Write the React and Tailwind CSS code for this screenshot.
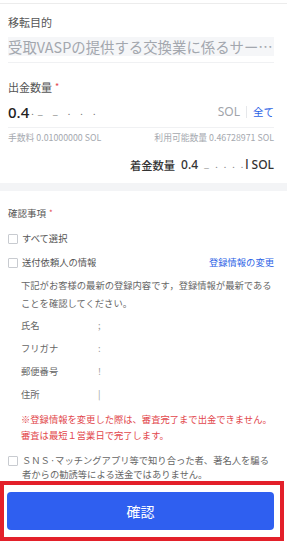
import React from "react";

function Box() {
  return <span className="inline-block w-[10px] h-[10px] border border-[#c8cbd0] rounded-[1px] bg-white shrink-0" />;
}

function InfoRow({ label, mark }) {
  return (
    <div className="h-[23px] flex items-center text-[9.3px] text-[#666]">
      <span className="w-[77px]">{label}</span>
      <span className="text-[#999]">{mark}</span>
    </div>
  );
}

export default function App() {
  return (
    <div className="w-[287px] h-[545px] bg-white overflow-hidden font-['Noto_Sans_CJK_JP',sans-serif]">
      <div className="h-[4px] border-b border-[#ececec]" />

      <div className="pl-2 pr-[13px]">
        <div className="mt-[8px] h-[20px] flex items-center text-[11px] text-[#555]">移転目的</div>
        <div className="mt-[5px] h-[19px] bg-[#f5f6f8] flex items-center text-[14.4px] text-[#a3a7ae] whitespace-nowrap">
          受取VASPの提供する交換業に係るサー…
        </div>
        <div className="mt-[6px] h-px bg-[#f0f1f3]" />

        <div className="mt-[14px] h-[20px] flex items-center text-[11px] text-[#555]">
          出金数量<span className="text-[#e5484d] ml-[3px] text-[9px]">*</span>
        </div>
        <div className="mt-[3px] h-[24px] flex items-center">
          <span className="text-[15px] font-medium text-[#222] font-['Noto_Sans',sans-serif]">0.4</span>
          <span className="text-[9px] text-[#777] tracking-[4px] ml-[2px]">._ _ . . .</span>
          <span className="ml-auto text-[12px] text-[#a0a4aa] font-['Noto_Sans',sans-serif]">SOL</span>
          <span className="mx-[6px] w-px h-[12px] bg-[#e6e8eb]" />
          <span className="text-[10.5px] text-[#2e64e6]">全て</span>
        </div>
        <div className="mt-[3px] h-px bg-[#f0f1f3]" />

        <div className="mt-[4px] h-[12px] flex items-center justify-between text-[8.8px] text-[#a5a9af]">
          <span>手数料 0.01000000 SOL</span>
          <span>利用可能数量 0.46728971 SOL</span>
        </div>

        <div className="mt-[11px] h-[20px] flex items-center justify-end text-[12px] text-[#333]">
          <span className="text-[11.3px] font-medium">着金数量</span>
          <span className="ml-[6px] font-medium font-['Noto_Sans',sans-serif]">0.4</span>
          <span className="ml-[6px] text-[9px] text-[#888] tracking-[2px]">_ . . . .</span>
          <span className="font-medium font-['Noto_Sans',sans-serif]">l SOL</span>
        </div>
      </div>

      <div className="mt-[8px] h-[8px] bg-[#f3f4f6]" />

      <div className="pl-2 pr-[13px]">
        <div className="mt-[12px] h-[20px] flex items-center text-[9.5px] text-[#555]">
          確認事項<span className="text-[#e5484d] ml-[3px] text-[8px]">*</span>
        </div>
        <div className="mt-[8px] h-[16px] flex items-center gap-[4px] text-[9.3px] text-[#555]">
          <Box />
          <span>すべて選択</span>
        </div>
        <div className="mt-[8px] h-[16px] flex items-center gap-[4px] text-[9.3px] text-[#555]">
          <Box />
          <span>送付依頼人の情報</span>
          <span className="ml-auto text-[#2e64e6]">登録情報の変更</span>
        </div>

        <div className="pl-[13px]">
          <p className="mt-[5px] text-[9.3px] leading-[18px] text-[#666]">
            下記がお客様の最新の登録内容です，登録情報が最新である<br />ことを確認してください。
          </p>
          <div className="mt-[2px]">
            <InfoRow label="氏名" mark=";" />
            <InfoRow label="フリガナ" mark=":" />
            <InfoRow label="郵便番号" mark="!" />
            <InfoRow label="住所" mark="|" />
          </div>
          <p className="mt-[5px] text-[9.3px] leading-[16px] text-[#e2474c]">
            ※登録情報を変更した際は、審査完了まで出金できません。<br />審査は最短１営業日で完了します。
          </p>
        </div>

        <div className="mt-[10px] flex gap-[4px] text-[9.3px] leading-[14px] text-[#666]">
          <span className="pt-[2px]"><Box /></span>
          <span>
            ＳＮＳ·マッチングアプリ等で知り合った者、著名人を騙る<br />者からの勧誘等による送金ではありません。
          </span>
        </div>
      </div>

      <div className="mr-[3px] h-[60px] border-[4px] border-[#e3202a] pl-[3px] pr-[6px] pt-[7px]">
        <button className="w-full h-[38px] rounded-[4px] bg-[#2f5ff0] text-white text-[14px] flex items-center justify-center">
          確認
        </button>
      </div>
    </div>
  );
}
